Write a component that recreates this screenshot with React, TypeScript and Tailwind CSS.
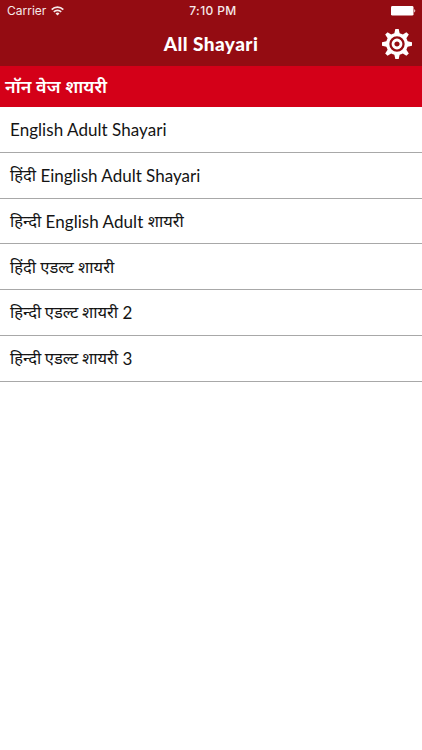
import clsx from "clsx";

type Part = { text: string; className: string };

const rows: { id: number; parts: Part[] }[] = [
    { id: 1, parts: [{ text: "English Adult Shayari", className: "pt-0.5 tracking-[0.05px]" }] },
    {
        id: 2,
        parts: [
            { text: "हिंदी", className: "font-['Noto_Sans'] text-[16.5px]" },
            { text: " Einglish Adult Shayari", className: "pt-0.5" },
        ],
    },
    {
        id: 3,
        parts: [
            { text: "हिन्दी", className: "font-['Noto_Sans'] text-[16.5px]" },
            { text: " English Adult ", className: "pt-0.5 tracking-[0.05px]" },
            { text: "शायरी", className: "font-['Noto_Sans'] text-[16.5px]" },
        ],
    },
    { id: 4, parts: [{ text: "हिंदी एडल्ट शायरी", className: "font-['Noto_Sans'] text-[16.5px]" }] },
    {
        id: 5,
        parts: [
            { text: "हिन्दी एडल्ट शायरी", className: "font-['Noto_Sans'] text-[16.5px] [word-spacing:-0.6px]" },
            { text: " 2", className: "pt-0.5" },
        ],
    },
    {
        id: 6,
        parts: [
            { text: "हिन्दी एडल्ट शायरी", className: "font-['Noto_Sans'] text-[16.5px] [word-spacing:-0.6px]" },
            { text: " 3", className: "pt-0.5" },
        ],
    },
];

const WifiIcon = () => (
    <svg width="13" height="10" viewBox="0 0 13 10" fill="none" stroke="#f6e9e9" strokeWidth="1.7">
        <path d="M0.7 3.6a8.2 8.2 0 0 1 11.6 0" />
        <path d="M2.8 5.9a5.2 5.2 0 0 1 7.4 0" />
        <path d="M6.5 9.5 4.5 7.5a2.8 2.8 0 0 1 4 0z" fill="#f6e9e9" stroke="none" />
    </svg>
);

const BatteryIcon = () => (
    <svg width="25" height="10" viewBox="0 0 25 10" fill="#fff">
        <rect x="0" y="0" width="22.5" height="9.6" rx="1.4" />
        <path d="M23.3 3.2c1.3.4 1.3 2.8 0 3.2z" />
    </svg>
);

const teeth = [0, 45, 90, 135, 180, 225, 270, 315];

const GearIcon = () => (
    <svg width="30" height="30" viewBox="-15 -15 30 30">
        {teeth.map((angle) => (
            <path key={angle} d="M-2.9 -9.5 -1.7 -15H1.7L2.9 -9.5z" fill="#fff" transform={`rotate(${angle})`} />
        ))}
        <circle r="9.3" fill="none" stroke="#fff" strokeWidth="3.2" />
        <circle r="4" fill="none" stroke="#fff" strokeWidth="2.8" />
    </svg>
);

export default function App() {
    return (
        <div className="h-[750px] w-full overflow-hidden bg-white font-['Lato','Noto_Sans',sans-serif] text-[#141414]">
            <header className="h-[66px] bg-[#940c12] text-white">
                {/* Status bar */}
                <div className="grid h-[22px] grid-cols-3 items-center pr-[6px] pl-[7px] font-['Inter',sans-serif] text-[12px] text-[#f6e9e9]">
                    <div className="flex items-center gap-[5px]">
                        <span>Carrier</span>
                        <WifiIcon />
                    </div>
                    <span className="pl-[3px] text-center font-medium tracking-[0.4px]">7:10 PM</span>
                    <div className="flex justify-end">
                        <BatteryIcon />
                    </div>
                </div>

                {/* Navigation bar */}
                <div className="grid h-[44px] grid-cols-[40px_1fr_40px] items-center">
                    <span />
                    <h1 className="text-center text-[19px] leading-[44px] font-black tracking-[0.45px]">All Shayari</h1>
                    <button type="button" aria-label="Settings">
                        <GearIcon />
                    </button>
                </div>
            </header>

            <h2 className="h-[41px] bg-[#d40018] pl-[5px] font-['Noto_Sans',sans-serif] text-[18px] leading-[41px] font-semibold text-white">नॉन वेज शायरी</h2>

            <ul>
                {rows.map((row) => (
                    <li key={row.id} className="flex h-[45.75px] items-center border-b border-[#a8a8a8] pl-[10px] text-[17px] leading-[44px] whitespace-pre">
                        {row.parts.map((part) => (
                            <span key={part.text} className={clsx("block", part.className)}>
                                {part.text}
                            </span>
                        ))}
                    </li>
                ))}
            </ul>
        </div>
    );
}
